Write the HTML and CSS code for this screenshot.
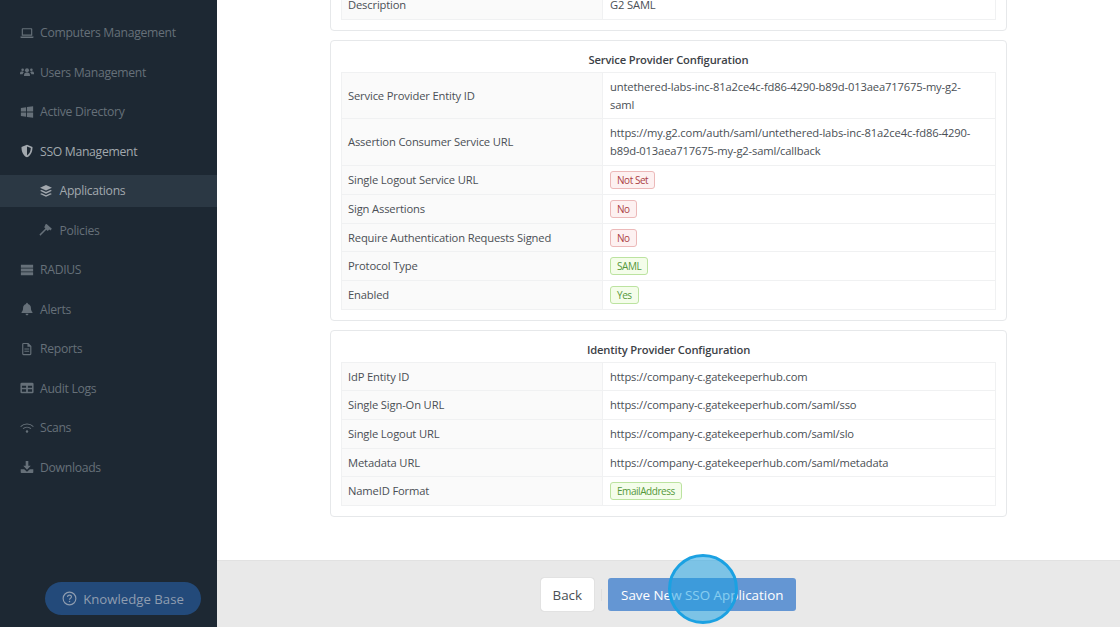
FILE: index.html
```html
<!DOCTYPE html>
<html lang="en">
<head>
    <meta charset="UTF-8">
    <meta name="viewport" content="width=device-width, initial-scale=1.0">
    <title>New SSO Application</title>
    <link rel="stylesheet" href="styles.css">
</head>
<body>
    <aside class="sidebar">
        <nav class="nav">
            <a class="nav-item">
                <svg class="nav-icon" viewBox="0 0 16 16"><path d="M3 2.500h10a1 1 0 0 1 1 1V11H2V3.500a1 1 0 0 1 1-1zM3.300 3.800V9.700h9.400V3.800z" fill-rule="evenodd"/><path d="M.5 12h15v.7a1 1 0 0 1-1 1h-13a1 1 0 0 1-1-1z"/></svg>
                Computers Management
            </a>
            <a class="nav-item">
                <svg class="nav-icon" viewBox="0 0 16 16"><circle cx="8" cy="6" r="2.300"/><circle cx="3" cy="5.500" r="1.500"/><circle cx="13" cy="5.500" r="1.500"/><path d="M4.600 12.500v-1.300a2.800 2.800 0 0 1 2.400-2.700h2a2.800 2.800 0 0 1 2.400 2.700v1.300z"/><path d="M0 10.500V9a1.800 1.800 0 0 1 1.800-1.500h1.700c.3.400.6.700 1 .9-.8.500-1.300 1.200-1.500 2.100zM16 10.500V9a1.800 1.800 0 0 0-1.800-1.500h-1.700c-.3.400-.6.700-1 .9.800.500 1.300 1.200 1.500 2.100z"/></svg>
                Users Management
            </a>
            <a class="nav-item">
                <svg class="nav-icon" viewBox="0 0 16 16"><path d="M1 3.300l6-.8v5H1zM8 2.300l7-1v6.200H8zM1 8.500h6v5l-6-.8zM8 8.500h7v6.200l-7-1z"/></svg>
                Active Directory
            </a>
            <a class="nav-item nav-item-open">
                <svg class="nav-icon" viewBox="0 0 16 16"><path fill-rule="evenodd" d="M8 .8l6.300 2.500c0 5.500-2 9.800-6.300 11.900C3.700 13.100 1.700 8.800 1.700 3.300zM8 2.800v10.300c2.800-1.700 4.200-4.700 4.400-8.500z"/></svg>
                SSO Management
            </a>
            <a class="nav-item nav-sub nav-item-active">
                <svg class="nav-icon" viewBox="0 0 16 16"><path d="M8 1l6.800 3.200L8 7.400 1.200 4.200z"/><path d="M3 6.900L8 9.200l5-2.300 1.800.9L8 11 1.200 7.800z"/><path d="M3 10.500L8 12.800l5-2.300 1.800.9L8 14.600l-6.800-3.200z"/></svg>
                Applications
            </a>
            <a class="nav-item nav-sub">
                <svg class="nav-icon" viewBox="0 0 16 16"><path d="M7.500 1.500l1.200-.5 6 5.500-1.700 2-1.300-1-1.700 1.700-1.700-1.500L1.500 14.500.5 13l6.800-6.800-1.300-1.400z"/></svg>
                Policies
            </a>
            <a class="nav-item">
                <svg class="nav-icon" viewBox="0 0 16 16"><path d="M1 2h14v3.500H1zM1 6.300h14v3.500H1zM1 10.600h14V14H1z"/></svg>
                RADIUS
            </a>
            <a class="nav-item">
                <svg class="nav-icon" viewBox="0 0 16 16"><path d="M8 .8c.6 0 1 .4 1 1v.5c2.200.5 3.500 2.200 3.500 4.500 0 2.700.8 3.600 1.700 4.700v1H1.800v-1c.9-1.100 1.700-2 1.700-4.700C3.500 4.500 4.800 2.800 7 2.300v-.5c0-.6.400-1 1-1zM6.300 13.500h3.400C9.700 14.500 9 15.200 8 15.200s-1.700-.7-1.700-1.700z"/></svg>
                Alerts
            </a>
            <a class="nav-item">
                <svg class="nav-icon" viewBox="0 0 16 16"><path fill-rule="evenodd" d="M4 1h5.500L13 4.500V13.500A1.500 1.500 0 0 1 11.500 15h-7.500A1.500 1.500 0 0 1 2.500 13.500v-11A1.500 1.500 0 0 1 4 1zM4 2.300a.3.3 0 0 0-.2.200v11c0 .1.100.2.2.2h7.500c.1 0 .2-.1.200-.2V5.500H8.500v-3.200z"/><path d="M5 7.500h5.500v1H5zM5 10h5.500v1H5z"/></svg>
                Reports
            </a>
            <a class="nav-item">
                <svg class="nav-icon" viewBox="0 0 16 16"><path fill-rule="evenodd" d="M2 2h12a1.500 1.500 0 0 1 1.500 1.500v9A1.500 1.500 0 0 1 14 14H2A1.500 1.500 0 0 1 .5 12.500v-9A1.500 1.500 0 0 1 2 2zM2.200 5.500v2.300h4.800V5.500zM9 5.500v2.300h4.800V5.500zM2.200 9.500v2.800h4.800V9.500zM9 9.500v2.800h4.800V9.500z"/></svg>
                Audit Logs
            </a>
            <a class="nav-item">
                <svg class="nav-icon" viewBox="0 0 16 16"><path d="M.7 6.300C4.800 2.500 11.200 2.500 15.300 6.300" fill="none" stroke="currentColor" stroke-width="1.200"/><path d="M3.500 8.800c2.600-2.300 6.400-2.300 9 0" fill="none" stroke="currentColor" stroke-width="1.200"/><circle cx="8" cy="12" r="1.400"/></svg>
                Scans
            </a>
            <a class="nav-item">
                <svg class="nav-icon" viewBox="0 0 16 16"><path d="M6.500 1h3v5.500h2.800L8 11 3.700 6.500h2.800z"/><path d="M.8 10.500h4L8 13.500l3.200-3h4v3.500a.8.8 0 0 1-.8.8H1.600a.8.8 0 0 1-.8-.8z"/></svg>
                Downloads
            </a>
        </nav>
        <a class="kb-link">
            <svg class="kb-icon" viewBox="0 0 16 16"><circle cx="8" cy="8" r="6.800" fill="none" stroke="currentColor" stroke-width="1.200"/><path d="M5.900 6.300c0-1.200 1-1.900 2.100-1.900s2.100.7 2.100 1.800c0 1.500-2.100 1.500-2.100 3.100" fill="none" stroke="currentColor" stroke-width="1.200"/><circle cx="8" cy="11.300" r=".8"/></svg>
            Knowledge Base
        </a>
    </aside>

    <main class="main">
        <div class="scroll-area">
            <div class="cards">
                <section class="card">
                    <table class="info-table">
                        <tr><td class="label">Description</td><td>G2 SAML</td></tr>
                    </table>
                </section>
                <section class="card">
                    <h2>Service Provider Configuration</h2>
                    <table class="info-table">
                        <tr><td class="label">Service Provider Entity ID</td><td>untethered-labs-inc-81a2ce4c-fd86-4290-b89d-013aea717675-my-g2-saml</td></tr>
                        <tr><td class="label">Assertion Consumer Service URL</td><td>https://my.g2.com/auth/saml/untethered-labs-inc-81a2ce4c-fd86-4290-b89d-013aea717675-my-g2-saml/callback</td></tr>
                        <tr><td class="label">Single Logout Service URL</td><td><span class="tag tag-red">Not Set</span></td></tr>
                        <tr><td class="label">Sign Assertions</td><td><span class="tag tag-red">No</span></td></tr>
                        <tr><td class="label">Require Authentication Requests Signed</td><td><span class="tag tag-red">No</span></td></tr>
                        <tr><td class="label">Protocol Type</td><td><span class="tag tag-green">SAML</span></td></tr>
                        <tr><td class="label">Enabled</td><td><span class="tag tag-green">Yes</span></td></tr>
                    </table>
                </section>
                <section class="card">
                    <h2>Identity Provider Configuration</h2>
                    <table class="info-table">
                        <tr><td class="label">IdP Entity ID</td><td>https://company-c.gatekeeperhub.com</td></tr>
                        <tr><td class="label">Single Sign-On URL</td><td>https://company-c.gatekeeperhub.com/saml/sso</td></tr>
                        <tr><td class="label">Single Logout URL</td><td>https://company-c.gatekeeperhub.com/saml/slo</td></tr>
                        <tr><td class="label">Metadata URL</td><td>https://company-c.gatekeeperhub.com/saml/metadata</td></tr>
                        <tr><td class="label">NameID Format</td><td><span class="tag tag-green">EmailAddress</span></td></tr>
                    </table>
                </section>
            </div>
        </div>
        <footer class="footer">
            <button class="btn btn-back">Back</button>
            <span class="footer-sep"></span>
            <button class="btn btn-save">Save New SSO Application</button>
            <span class="click-marker"></span>
        </footer>
    </main>
</body>
</html>
```

FILE: styles.css
```css
html, body {
    height: 100%;
}

body {
    margin: 0;
    display: flex;
    overflow: hidden;
    font-family: "Open Sans", "Noto Sans", sans-serif;
    font-size: 12px;
    color: #4a4f55;
    background-color: #ffffff;
}

/* Sidebar */
.sidebar {
    width: 217px;
    flex-shrink: 0;
    display: flex;
    flex-direction: column;
    background-color: #1d2833;
}

.nav {
    flex: 1;
    display: flex;
    flex-direction: column;
    gap: 7.5px;
    padding-top: 16.5px;
}

.nav-item {
    height: 32px;
    display: flex;
    align-items: center;
    gap: 6.5px;
    padding-left: 19.5px;
    font-size: 12.2px;
    letter-spacing: -0.3px;
    color: #667079;
}

.nav-sub {
    padding-left: 39px;
}

.nav-item-open {
    color: #a2a8ae;
}

.nav-item-active {
    background-color: #2b3844;
    color: #a2a8ae;
}

.nav-icon {
    width: 14px;
    height: 14px;
    flex-shrink: 0;
    fill: currentColor;
}

.kb-link {
    align-self: flex-end;
    width: 156px;
    height: 33px;
    margin: 0 16px 12px 0;
    display: flex;
    align-items: center;
    justify-content: center;
    gap: 6px;
    border-radius: 17px;
    background-color: #234a7a;
    color: #8f9db0;
    font-size: 13.2px;
}

.kb-icon {
    width: 15px;
    height: 15px;
    fill: currentColor;
}

/* Main */
.main {
    flex: 1;
    min-width: 0;
    display: flex;
    flex-direction: column;
    position: relative;
}

.scroll-area {
    flex: 1;
    min-height: 0;
    display: flex;
    flex-direction: column;
    justify-content: flex-end;
    align-items: center;
    overflow: hidden;
    padding-bottom: 43px;
}

.cards {
    width: 677px;
    flex-shrink: 0;
    display: flex;
    flex-direction: column;
    gap: 9px;
}

.card {
    border: 1px solid #e6e8ea;
    border-radius: 4px;
    padding: 10px;
    background-color: #ffffff;
}

.card h2 {
    margin: 0 0 3px;
    font-size: 11.2px;
    line-height: 18px;
    font-weight: 600;
    letter-spacing: -0.15px;
    text-align: center;
    color: #3c4146;
}

.info-table {
    width: 100%;
    border-collapse: collapse;
    table-layout: fixed;
    font-size: 11.2px;
    letter-spacing: -0.15px;
    line-height: 18px;
}

.info-table td {
    padding: 5px 14px 4.7px 7px;
    border: 1px solid #f0f1f2;
    vertical-align: middle;
}

.info-table .label {
    width: 240px;
    padding-left: 6px;
    background-color: #fafafa;
}

.tag {
    display: inline-block;
    height: 18px;
    padding: 0 6px;
    border: 1px solid;
    border-radius: 3px;
    box-sizing: border-box;
    font-size: 10px;
    letter-spacing: -0.45px;
    line-height: 16px;
    vertical-align: top;
}

.tag-red {
    background-color: #fdf1f1;
    border-color: #ecb9b9;
    color: #ab3f45;
}

.tag-green {
    background-color: #f4fdea;
    border-color: #bce3a0;
    color: #55983a;
}

/* Footer */
.footer {
    height: 67px;
    flex-shrink: 0;
    display: flex;
    align-items: center;
    justify-content: center;
    padding-top: 1px;
    box-sizing: border-box;
    background-color: #e9e9e9;
    border-top: 1px solid #e2e2e2;
    position: relative;
}

.btn {
    height: 33px;
    border: none;
    border-radius: 3px;
    padding: 0 13px;
    font-family: inherit;
    font-size: 13.4px;
}

.btn-back {
    padding: 0 12px;
    background-color: #ffffff;
    color: #4a4f55;
    box-shadow: 0 0 1px rgba(0, 0, 0, 0.3);
}

.footer-sep {
    width: 1px;
    height: 12px;
    margin: 0 6px 0 7px;
    background-color: #dedede;
}

.btn-save {
    background-color: #6496d3;
    color: #ffffff;
}

/* Click highlight over the save button */
.click-marker {
    position: absolute;
    left: 451px;
    top: -7px;
    width: 64px;
    height: 64px;
    border: 3px solid #1ba1e2;
    border-radius: 50%;
    background-color: rgba(27, 161, 226, 0.53);
}
```
